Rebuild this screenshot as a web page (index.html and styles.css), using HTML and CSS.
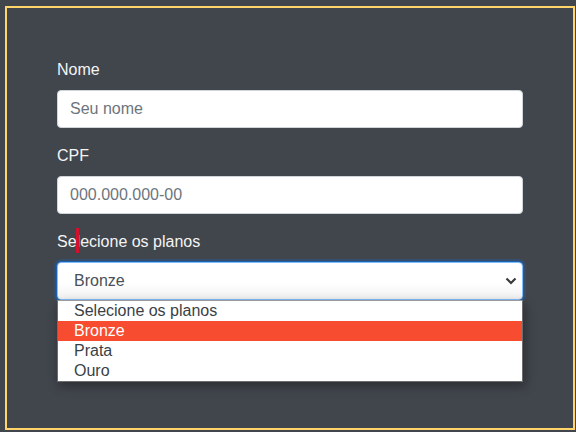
FILE: index.html
```html
<!DOCTYPE html>
<html lang="pt">
<head>
<meta charset="utf-8">
<title>Planos</title>
<link rel="stylesheet" href="styles.css">
</head>
<body>
<div class="frame">
  <form class="form">
    <div class="group">
      <label class="label" for="nome">Nome</label>
      <input class="control" id="nome" type="text" placeholder="Seu nome">
    </div>
    <div class="group">
      <label class="label" for="cpf">CPF</label>
      <input class="control" id="cpf" type="text" placeholder="000.000.000-00">
    </div>
    <div class="group">
      <label class="label label-sel" for="plano">Selecione os planos<span class="caret-mark"></span></label>
      <div class="select-wrap">
        <div class="select" id="plano">Bronze</div>
        <svg class="chevron" width="12" height="8" viewBox="0 0 12 8"><path d="M1.5 1.5 L6 6 L10.5 1.5" fill="none" stroke="#3a3a3a" stroke-width="2.2"/></svg>
        <ul class="options">
          <li class="opt">Selecione os planos</li>
          <li class="opt active">Bronze</li>
          <li class="opt">Prata</li>
          <li class="opt">Ouro</li>
        </ul>
      </div>
    </div>
  </form>
</div>
</body>
</html>
```
FILE: styles.css
```css
* { box-sizing: border-box; }
html, body { margin: 0; padding: 0; }
body {
  background: #41454c;
  font-family: "Liberation Sans", Arial, sans-serif;
  font-size: 16px;
  line-height: 1.5;
  width: 576px;
  height: 432px;
  overflow: hidden;
  padding: 6px 0 0 5px;
}
.frame {
  width: 570px;
  height: 424px;
  border: 2px solid #ffd56b;
  padding: 50px;
}
.form { margin: 0; }
.group { margin-bottom: 16px; }
.label {
  display: block;
  color: #f4f4f4;
  margin-bottom: 8px;
  line-height: 24px;
}
.label-sel { position: relative; }
.caret-mark {
  position: absolute;
  left: 19px;
  top: -2px;
  width: 3px;
  height: 25px;
  background: #d3112e;
}
.control {
  display: block;
  width: 100%;
  height: 38px;
  padding: 6px 12px;
  font-family: inherit;
  font-size: 16px;
  line-height: 24px;
  color: #495057;
  background: #fff;
  border: 1px solid #ced4da;
  border-radius: 4px;
  outline: none;
}
.control::placeholder { color: #6c757d; opacity: 1; }
.select-wrap { position: relative; }
.select {
  height: 38px;
  padding: 6px 16px;
  line-height: 24px;
  color: #495057;
  background: linear-gradient(#fff 0%, #fff 55%, #f1f1f1 100%);
  border: 1px solid #80bdff;
  border-radius: 4px;
  box-shadow: 0 0 0 1px rgba(0, 123, 255, 0.45), 0 0 0 3px rgba(0, 123, 255, 0.18);
}
.chevron {
  position: absolute;
  right: 6px;
  top: 15px;
}
.options {
  position: absolute;
  left: 0;
  right: 0;
  top: 38px;
  margin: 0;
  padding: 0 0 0 0;
  list-style: none;
  background: #fff;
  border: 1px solid #6e6e6e;
  border-top-color: #9a9a9a;
  box-shadow: 2px 4px 10px rgba(0, 0, 0, 0.35);
  z-index: 2;
}
.opt {
  height: 20px;
  line-height: 20px;
  padding-left: 16px;
  color: #3a3f46;
}
.opt.active {
  background: #f74c2f;
  color: #fff;
}
```
